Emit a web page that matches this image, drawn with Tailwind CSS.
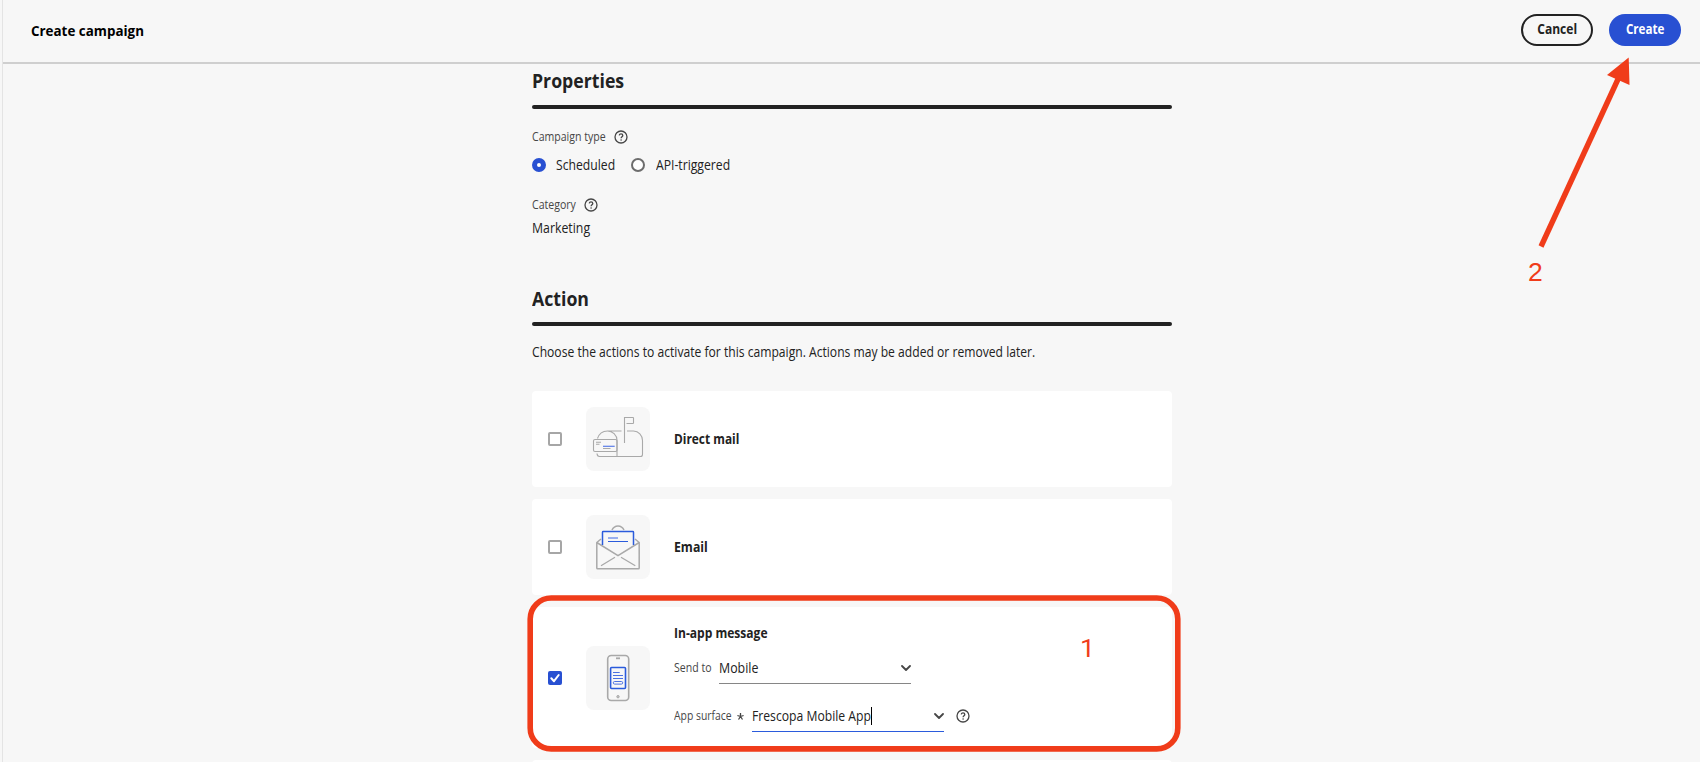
<!DOCTYPE html>
<html lang="en">
<head>
<meta charset="utf-8">
<title>Create campaign</title>
<script src="https://cdn.jsdelivr.net/npm/@tailwindcss/browser@4"></script>
</head>
<body class="bg-[#f7f7f7] font-['Open_Sans','Noto_Sans',sans-serif] text-[#222222]">
<svg class="hidden">
  <symbol id="help" viewBox="0 0 14 14">
    <circle cx="7" cy="7" r="6" fill="none" stroke="#464646" stroke-width="1.300"/>
    <path d="M5.2 5.3C5.5 4.2 6.2 3.9 7 3.9c1.1 0 1.8.6 1.8 1.5 0 1.2-1.7 1.4-1.7 2.8" fill="none" stroke="#464646" stroke-width="1.300"/>
    <circle cx="7.1" cy="10" r=".8" fill="#464646"/>
  </symbol>
  <symbol id="chevron" viewBox="0 0 10 6">
    <path d="M1 1l4 4 4-4" fill="none" stroke="#464646" stroke-width="1.8" stroke-linecap="round" stroke-linejoin="round"/>
  </symbol>
</svg>
<div class="relative ml-[2px] h-[762px] overflow-hidden border-l border-[#e4e4e4]">

  <header class="flex h-[64px] items-center justify-between border-b-2 border-[#cfcfcf] pr-[19px] pb-[2px] pl-[28px]">
    <h1 class="w-[114px] text-[15px] font-bold whitespace-nowrap text-black"><span class="inline-block origin-left scale-x-[.893]">Create campaign</span></h1>
    <div class="flex gap-4 text-sm font-bold">
      <button class="flex h-8 w-[72px] items-center justify-center rounded-full border-2 border-[#222222] pb-[2px]"><span class="scale-x-[.86]">Cancel</span></button>
      <button class="flex h-8 w-[72px] items-center justify-center rounded-full bg-[#2850d2] pb-[2px] text-white"><span class="scale-x-[.83]">Create</span></button>
    </div>
  </header>

  <main class="ml-[529px] w-[640px] pt-[3px] whitespace-nowrap">
    <h2 class="h-7 text-xl leading-7 font-bold"><span class="inline-block origin-left scale-x-[.885]">Properties</span></h2>
    <div class="mt-[10px] h-1 rounded-sm bg-[#222222]"></div>

    <div class="mt-[19px] flex h-[17px] items-center text-xs text-[#464646]">
      <div class="w-[82px]"><span class="inline-block origin-left scale-x-[.88]">Campaign type</span></div>
      <svg class="size-[14px]"><use href="#help"/></svg>
    </div>
    <div class="mt-[10px] flex h-5 items-center text-sm">
      <span class="size-[14px] rounded-full border-[5px] border-[#2850d2] bg-white"></span>
      <div class="ml-[10px] w-[75px] pb-px"><span class="inline-block origin-left scale-x-[.87]">Scheduled</span></div>
      <span class="size-[14px] rounded-full border-2 border-[#6d6d6d] bg-white"></span>
      <div class="ml-[11px] pb-px"><span class="inline-block origin-left scale-x-[.87]">API-triggered</span></div>
    </div>
    <div class="mt-[21px] flex h-[17px] items-center text-xs text-[#464646]">
      <div class="w-[52px]"><span class="inline-block origin-left scale-x-[.88]">Category</span></div>
      <svg class="size-[14px]"><use href="#help"/></svg>
    </div>
    <p class="mt-[5px] text-sm"><span class="inline-block origin-left scale-x-[.88]">Marketing</span></p>

    <h2 class="mt-[47px] h-7 text-xl leading-7 font-bold"><span class="inline-block origin-left scale-x-[.885]">Action</span></h2>
    <div class="mt-[9px] h-1 rounded-sm bg-[#222222]"></div>
    <p class="mt-4 text-sm"><span class="inline-block origin-left scale-x-[.866]">Choose the actions to activate for this campaign. Actions may be added or removed later.</span></p>

    <section class="mt-[29px] flex flex-col gap-3">
      <article class="flex h-24 items-center gap-6 rounded-[4px] bg-white px-4">
        <span class="size-[14px] rounded-[2px] border-2 border-[#a6a6a6]"></span>
        <div class="size-16 rounded-lg bg-[#f7f7f7]">
          <svg viewBox="0 0 64 64" fill="none" stroke="#a9a9a9" stroke-width="1.100">
            <path d="M38.5 36V10.5h8.4q.6 0 .6.6v4.8q0 .6-.6.6H40.5M21.5 24H35.5M41 24h6.5c5 0 9 4.200 9 9.500v14q0 2-2 2H13.500q-2.300 0-2.500-3M11.500 31.500C13 27 17 24 21.500 24c5 0 9.500 4 9.500 9.500v16"/>
            <rect x="7.500" y="32.500" width="23.500" height="12" rx="1.500"/>
            <path d="M10 35.200h5M10 37.300h3.500M17 41.500h7.500"/>
            <path d="M17 39.300h11.700" stroke="#5b7de8" stroke-width="1.200"/>
          </svg>
        </div>
        <h3 class="text-sm font-bold"><span class="inline-block origin-left scale-x-[.85]">Direct mail</span></h3>
      </article>

      <article class="flex h-24 items-center gap-6 rounded-[4px] bg-white px-4">
        <span class="size-[14px] rounded-[2px] border-2 border-[#a6a6a6]"></span>
        <div class="size-16 rounded-lg bg-[#f7f7f7]">
          <svg viewBox="0 0 64 64" fill="none" stroke="#a9a9a9" stroke-width="1.500" stroke-linejoin="round">
            <path d="M10.800 27.500L32 40.700 53.200 27.500V53q0 .8-.8.8H11.600q-.8 0-.8-.8zM10.800 27.500L15 24M53.200 27.500L49 24M26 15c2.500-5.500 9.500-5.500 12 0"/>
            <path d="M15 50.700L29 42.300M49.300 50.700L35 42.300" stroke-width="1.300"/>
            <path d="M16.500 30V17.200q0-.7.7-.7h29.600q.7 0 .7.700V30" stroke="#2b5bdc"/>
            <path d="M22 23h10" stroke="#8ea6ee" stroke-width="1.800"/>
            <path d="M22 26.500h20" stroke="#2b5bdc" stroke-width="1"/>
          </svg>
        </div>
        <h3 class="text-sm font-bold"><span class="inline-block origin-left scale-x-[.875]">Email</span></h3>
      </article>

      <article class="flex h-[141px] items-center gap-6 rounded-[4px] bg-white px-4">
        <span class="flex size-[14px] items-center justify-center rounded-[2px] bg-[#2850d2]">
          <svg class="size-[14px]" viewBox="0 0 14 14"><path d="M3.300 7.300l2.700 2.900 4.700-6.200" fill="none" stroke="#fff" stroke-width="2" stroke-linecap="round" stroke-linejoin="round"/></svg>
        </span>
        <div class="size-16 rounded-lg bg-[#f7f7f7]">
          <svg viewBox="0 0 64 64" fill="none" stroke="#a9a9a9" stroke-width="1.600">
            <rect x="21.700" y="9.500" width="21" height="45" rx="3.500"/>
            <path d="M30 12.300h4" stroke-width="1.800"/>
            <circle cx="32" cy="50.700" r="1.200" fill="#c4c4c4" stroke-width="1"/>
            <rect x="24.600" y="21.500" width="14.900" height="21" rx="1" stroke="#2b5bdc"/>
            <path d="M27 26.500h6.700M27 29.500h10M27 32.500h10" stroke="#4a70e2" stroke-width="1.100"/>
            <rect x="27.300" y="35.500" width="9.400" height="2.600" rx="1.300" stroke="#4a70e2" stroke-width="1"/>
          </svg>
        </div>
        <div>
          <h3 class="h-5 text-sm font-bold"><span class="inline-block origin-left scale-x-[.86]">In-app message</span></h3>
          <div class="mt-[9px] flex h-8 items-center">
            <div class="w-[45px] pb-px text-xs text-[#464646]"><span class="inline-block origin-left scale-x-[.88]">Send to</span></div>
            <div class="flex h-8 w-[192px] items-center justify-between border-b border-[#868686] text-sm">
              <span class="inline-block origin-left scale-x-[.885]">Mobile</span>
              <svg class="h-[6px] w-[10px]"><use href="#chevron"/></svg>
            </div>
          </div>
          <div class="mt-4 flex h-8 items-center">
            <div class="w-[63px] pb-px text-xs text-[#464646]"><span class="inline-block origin-left scale-x-[.865]">App surface</span></div>
            <svg class="mr-[8px] h-[7px] w-[7px]" viewBox="0 0 7 7"><path d="M3.500 0v3.500M3.500 3.500L.4 2.500M3.500 3.500l3.100-1M3.500 3.500L1.500 6.500M3.500 3.500l2 3" stroke="#464646" stroke-width="1.300"/></svg>
            <div class="flex h-8 w-[192px] items-center border-b border-[#2b5bdc] text-sm">
              <div class="w-[119px]"><span class="inline-block origin-left scale-x-[.87]">Frescopa Mobile App</span></div>
              <span class="h-[18px] w-px bg-black"></span>
              <svg class="ml-auto h-[6px] w-[10px]"><use href="#chevron"/></svg>
            </div>
            <svg class="ml-3 size-[14px]"><use href="#help"/></svg>
          </div>
        </div>
      </article>

      <article class="h-24 rounded-[4px] bg-white"></article>
    </section>
  </main>

  <!-- Step annotations drawn over the page -->
  <svg class="absolute top-0 left-[-3px] h-[762px] w-[1700px]" viewBox="0 0 1700 762">
    <rect x="530.200" y="598" width="647.600" height="150.900" rx="21" fill="none" stroke="#f03c1a" stroke-width="5.600"/>
    <path d="M1541 246.500L1619 77" stroke="#f03c1a" stroke-width="5.400"/>
    <path d="M1628.700 57.500L1607 75l22.500 10z" fill="#f03c1a"/>
    <g fill="#f03c1a" font-size="26.500">
      <text x="1080" y="657" font-family="Roboto, sans-serif">1</text>
      <text x="1528" y="281" font-family="Liberation Sans, sans-serif">2</text>
    </g>
  </svg>
</div>
</body>
</html>
